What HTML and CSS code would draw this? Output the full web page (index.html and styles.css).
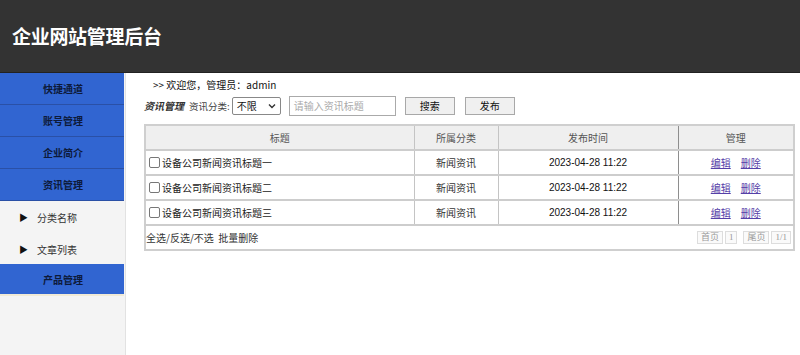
FILE: index.html
```html
<!DOCTYPE html>
<html lang="zh">
<head>
<meta charset="utf-8">
<title>企业网站管理后台</title>
<link rel="stylesheet" href="styles.css">
</head>
<body>
<header class="top">
  <h1 class="brand">企业网站管理后台</h1>
</header>
<div class="layout">
  <aside class="side">
    <a class="nav">快捷通道</a>
    <a class="nav">账号管理</a>
    <a class="nav">企业简介</a>
    <a class="nav">资讯管理</a>
    <div class="sub"><span class="tri">▶</span>分类名称</div>
    <div class="sub"><span class="tri">▶</span>文章列表</div>
    <a class="nav last">产品管理</a>
  </aside>
  <main class="main">
    <div class="welcome">&gt;&gt; 欢迎您，管理员：admin</div>
    <div class="toolbar">
      <span class="title">资讯管理</span>
      <span class="label">资讯分类:</span>
      <div class="select"><span>不限</span><svg width="8" height="6" viewBox="0 0 8 6"><path d="M1 1.5 L4 4.5 L7 1.5" fill="none" stroke="#333" stroke-width="1.4"/></svg></div>
      <div class="input">请输入资讯标题</div>
      <div class="btn">搜索</div>
      <div class="btn">发布</div>
    </div>
    <table class="grid">
      <thead>
        <tr><th class="c1">标题</th><th class="c2">所属分类</th><th class="c3">发布时间</th><th class="c4">管理</th></tr>
      </thead>
      <tbody>
        <tr><td class="tl"><span class="cb"></span>设备公司新闻资讯标题一</td><td>新闻资讯</td><td class="dt">2023-04-28 11:22</td><td><a class="lk">编辑</a><a class="lk">删除</a></td></tr>
        <tr><td class="tl"><span class="cb"></span>设备公司新闻资讯标题二</td><td>新闻资讯</td><td class="dt">2023-04-28 11:22</td><td><a class="lk">编辑</a><a class="lk">删除</a></td></tr>
        <tr><td class="tl"><span class="cb"></span>设备公司新闻资讯标题三</td><td>新闻资讯</td><td class="dt">2023-04-28 11:22</td><td><a class="lk">编辑</a><a class="lk">删除</a></td></tr>
        <tr class="foot"><td colspan="4">
          <div class="footrow">
            <span class="ops">全选/反选/不选&nbsp;&nbsp;批量删除</span>
            <div class="pager"><span class="pg">首页</span><span class="pg">1</span><span class="pg gap">尾页</span><span class="pg">1/1</span></div>
          </div>
        </td></tr>
      </tbody>
    </table>
  </main>
</div>
</body>
</html>
```
FILE: styles.css
```css
* { box-sizing: border-box; }
html, body { margin: 0; padding: 0; height: 100%; }
body {
  font-family: "Noto Sans CJK SC", "Liberation Sans", sans-serif;
  font-size: 10px;
  color: #222;
  background: #fff;
  overflow: hidden;
}
.top {
  height: 73px;
  background: #333333;
  border-bottom: 1px solid #222;
  display: flex;
  align-items: center;
  padding-left: 12px;
  padding-bottom: 1px;
}
.brand {
  margin: 0;
  color: #fff;
  font-size: 19px;
  font-weight: bold;
  letter-spacing: -0.3px;
}
.layout {
  display: flex;
  height: calc(100% - 73px);
}
.side {
  width: 126px;
  flex: none;
  background: #f4f4f4;
  border-right: 1px solid #e2e2e2;
  display: flex;
  flex-direction: column;
}
.nav {
  display: flex;
  align-items: center;
  justify-content: center;
  height: 32px;
  width: 124px;
  background: #3165d1;
  border-bottom: 1px solid #2a50a6;
  color: #0d1a3a;
  font-weight: bold;
  font-size: 10px;
  padding-left: 2px;
}
.nav.last {
  border-bottom: 2px solid #f1ead6;
}
.sub {
  height: 31.5px;
  display: flex;
  align-items: center;
  padding-left: 19px;
  padding-top: 2px;
  font-size: 10px;
  color: #333;
}
.tri {
  font-size: 9px;
  color: #111;
  margin-right: 9px;
}
.main {
  flex: 1;
  padding: 0 7px 0 18px;
}
.welcome {
  height: 21px;
  display: flex;
  align-items: center;
  padding-left: 9px;
  padding-top: 1px;
  font-size: 10px;
  color: #111;
}
.toolbar {
  display: flex;
  align-items: center;
  height: 21px;
  margin-top: 1px;
}
.title {
  font-style: italic;
  font-weight: bold;
  font-size: 10px;
  color: #333;
  margin-right: 5px;
}
.label {
  color: #444;
  font-size: 9.5px;
  margin-right: 2px;
}
.select {
  width: 49px;
  height: 18px;
  border: 1px solid #888;
  border-radius: 2px;
  display: flex;
  align-items: center;
  justify-content: space-between;
  padding: 0 4px;
  color: #111;
  margin-right: 8px;
}
.input {
  width: 107px;
  height: 20px;
  border: 1px solid #aaa;
  display: flex;
  align-items: center;
  padding-left: 4px;
  color: #aaa;
  margin-right: 9px;
}
.btn {
  width: 50px;
  height: 18px;
  border: 1px solid #a8a8a8;
  background: #f0f0f0;
  display: flex;
  align-items: center;
  justify-content: center;
  color: #111;
  margin-right: 10px;
}
.grid {
  margin-top: 8px;
  width: 649px;
  border-collapse: collapse;
  border: 2px solid #cfcfcf;
  table-layout: fixed;
}
.grid th, .grid td {
  border: 1px solid #c4c4c4;
  height: 25px;
  padding: 0;
  text-align: center;
  font-weight: normal;
  font-size: 10px;
  color: #333;
}
.grid th {
  background: #efefef;
  color: #555;
}
.grid tbody tr { border-top: 2px solid #cdcdcd; }
.c1 { width: 269px; }
.c2 { width: 84px; }
.c3 { width: 180px; border-right: 1px solid #8e8e8e !important; }
.c4 { width: 116px; }
.grid td:nth-child(3) { border-right: 1px solid #8e8e8e; }
.grid td.tl {
  text-align: left;
  padding-left: 3px;
  color: #222;
}
.cb {
  display: inline-block;
  width: 11px;
  height: 11px;
  border: 1px solid #777;
  border-radius: 2px;
  vertical-align: -1px;
  margin-right: 2px;
  background: #fff;
}
.dt { color: #111 !important; font-family: "Liberation Sans", sans-serif; font-size: 10px !important; }
.lk {
  color: #5540a8;
  text-decoration: underline;
  margin: 0 5px;
}
.grid tr.foot td {
  text-align: left;
  height: 25px;
  border-left: none;
  border-right: none;
}
.footrow {
  display: flex;
  justify-content: space-between;
  align-items: center;
  color: #333;
  padding-right: 2px;
}
.pager {
  display: flex;
  align-items: center;
}
.pg {
  border: 1px solid #ddd;
  color: #999;
  font-family: "Liberation Serif", "Noto Sans CJK SC", serif;
  font-size: 9px;
  height: 13px;
  line-height: 11px;
  padding: 0 3px;
  margin-left: 2px;
  background: #fafafa;
}
.pg.gap { margin-left: 6px; }
```
